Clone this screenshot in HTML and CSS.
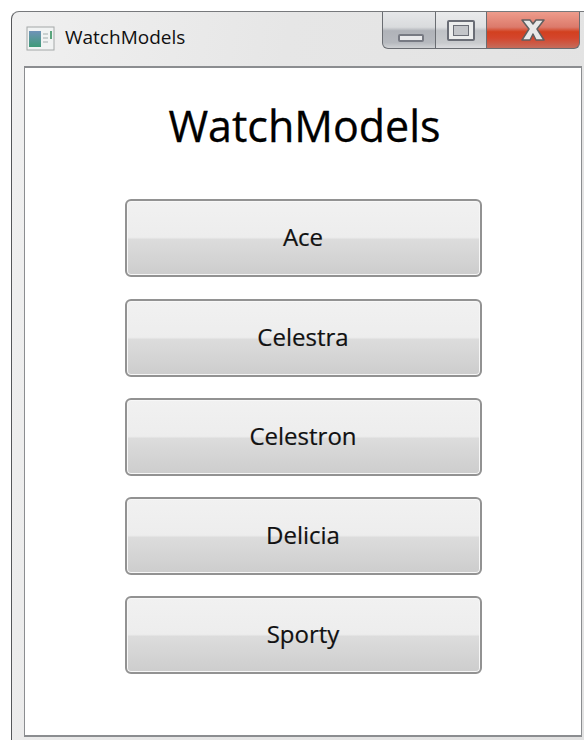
FILE: index.html
```html
<!DOCTYPE html>
<html lang="en">
<head>
<meta charset="utf-8">
<title>WatchModels</title>
<link rel="stylesheet" href="styles.css">
</head>
<body>
<div class="window">
  <header class="titlebar">
    <svg class="app-icon" width="30" height="26" viewBox="0 0 30 26">
      <defs>
        <linearGradient id="pane" x1="0" y1="0" x2="0" y2="1">
          <stop offset="0" stop-color="#6f93b8"/>
          <stop offset="1" stop-color="#3f9a78"/>
        </linearGradient>
      </defs>
      <rect x="1" y="1" width="27" height="23" fill="#f1f3f3" stroke="#a4a8a8"/>
      <rect x="3" y="5" width="12" height="16" fill="url(#pane)"/>
      <rect x="17" y="7" width="5" height="2" fill="#c9d0d0"/>
      <rect x="17" y="11" width="5" height="2" fill="#c9d0d0"/>
      <rect x="17" y="15" width="5" height="2" fill="#c9d0d0"/>
      <rect x="24" y="5" width="2" height="8" fill="#5aa57c"/>
    </svg>
    <span class="title">WatchModels</span>
    <div class="controls">
      <div class="ctl ctl-min"><span class="glyph-min"></span></div>
      <div class="ctl ctl-max"><span class="glyph-max"></span></div>
      <div class="ctl ctl-close">
        <svg width="26" height="24" viewBox="0 0 26 24">
          <path d="M2 2h8l3 4 3-4h8l-7 9 7 11h-8l-3-6-3 6H2l7-11z" fill="#e8e8e8" stroke="#5f5f60" stroke-width="1.5" stroke-linejoin="round"/>
        </svg>
      </div>
    </div>
  </header>
  <main class="client">
    <h1 class="heading">WatchModels</h1>
    <div class="models">
      <button class="model">Ace</button>
      <button class="model">Celestra</button>
      <button class="model">Celestron</button>
      <button class="model">Delicia</button>
      <button class="model">Sporty</button>
    </div>
  </main>
</div>
</body>
</html>
```
FILE: styles.css
```css
* { box-sizing: border-box; }

html, body {
  margin: 0;
  height: 100%;
  background: #fff;
  overflow: hidden;
}

body {
  padding: 11px 0 0 11px;
  font-family: "Open Sans", "Noto Sans", sans-serif;
}

.window {
  width: 573px;
  height: 729px;
  display: flex;
  flex-direction: column;
  padding: 0 2px 3px 12px;
  border-top: 1px solid #77797c;
  border-left: 1px solid #55575a;
  border-top-left-radius: 8px;
  background: linear-gradient(100deg, #f0f0f0 0%, #e6e6e6 40%, #e2e2e2 100%);
}

.titlebar {
  height: 54px;
  flex: none;
  display: flex;
  align-items: flex-start;
  position: relative;
}

.app-icon {
  margin: 14px 0 0 2px;
  flex: none;
}

.title {
  margin: 11px 0 0 9px;
  font-size: 19px;
  line-height: 28px;
  color: #101010;
}

.controls {
  position: absolute;
  top: 0;
  right: 2px;
  height: 37px;
  width: 198px;
  display: flex;
}

.ctl {
  height: 37px;
  display: flex;
  align-items: center;
  justify-content: center;
  border-bottom: 1px solid #6a6d72;
  border-right: 1px solid #6a6d72;
}

.ctl-min {
  width: 54px;
  align-items: flex-end;
  padding: 0 0 6px 3px;
  border-left: 1px solid #6a6d72;
  border-bottom-left-radius: 6px;
  background: linear-gradient(#e6e7e9 0%, #d9dbdd 42%, #b0b3b9 52%, #b6b9be 85%, #cfd1d4 100%);
}

.ctl-max {
  width: 51px;
  background: linear-gradient(#eaebec 0%, #dfe0e2 42%, #bfc2c6 52%, #c8cacd 85%, #dcdde0 100%);
}

.ctl-close {
  width: 93px;
  border-bottom-right-radius: 6px;
  background: linear-gradient(#ee9c8c 0%, #dc7a6b 42%, #d2401f 55%, #d4452c 72%, #c56c5c 100%);
}

.glyph-min {
  width: 26px;
  height: 8px;
  background: #e9eaec;
  border: 2px solid #777a83;
  border-radius: 2px;
}

.glyph-max {
  width: 28px;
  height: 21px;
  background: #eceded;
  border: 2px solid #6a6d76;
  border-radius: 2px;
  display: flex;
  padding: 3px 4px;
}

.glyph-max::before {
  content: "";
  flex: 1;
  background: #c3c5c9;
  border: 1px solid #6a6d76;
}

.client {
  flex: 1;
  display: flex;
  flex-direction: column;
  align-items: center;
  background: #fff;
  border: 1px solid #8b8d90;
  border-top-width: 2px;
  border-bottom-width: 2px;
}

.heading {
  margin: 28px 0 0;
  padding-left: 3px;
  font-size: 43px;
  line-height: 60px;
  font-weight: 400;
  color: #000;
  -webkit-text-stroke: 0.3px #000;
}

.models {
  margin-top: 43px;
  display: flex;
  flex-direction: column;
  gap: 21px;
}

.model {
  width: 357px;
  height: 78px;
  padding: 0 0 3px;
  font: inherit;
  font-size: 24px;
  color: #111;
  -webkit-text-stroke: 0.2px #111;
  border: 2px solid #929292;
  border-radius: 6px;
  background: linear-gradient(#f1f1f1 0%, #ededed 49%, #dcdcdc 52%, #cdcdcd 100%);
  box-shadow: inset 0 0 0 1px #f7f7f7;
}

/* the first two rows sit a pixel further apart */
.model:nth-child(2) {
  margin-top: 1px;
}
```
